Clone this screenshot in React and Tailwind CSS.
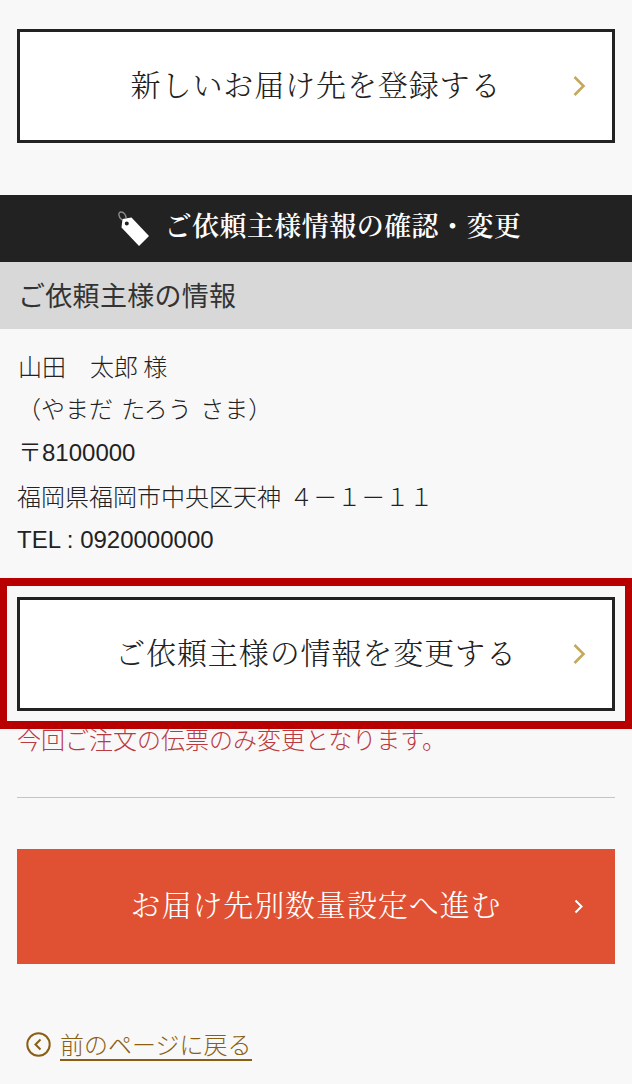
import React from 'react';

const serif = 'font-["Noto_Serif_CJK_JP","Liberation_Serif",serif]';
const gothic = 'font-["Noto_Sans_CJK_JP",sans-serif]';
const sans = 'font-["Liberation_Sans","Noto_Sans_CJK_JP",sans-serif]';

const LinkButton = ({ children }) => (
  <a className="grid grid-cols-[1fr_auto_1fr] items-center h-[114px] border-[3px] border-[#222] bg-white text-[#222] text-[30px] leading-[40px] tracking-[0.9px]">
    <span />
    <span className={`-mt-[7px] font-light ${serif}`}>{children}</span>
    <svg width="14" height="22" viewBox="0 0 14 22" fill="none" className="justify-self-end mr-[26px]">
      <path d="M2.5 2 L11.5 11 L2.5 20" stroke="#c4a95c" strokeWidth="2.6" />
    </svg>
  </a>
);

const TagIcon = () => (
  <svg width="36" height="38" viewBox="0 0 36 38" className="shrink-0">
    <path d="M6 10 C2 7 2 2 5 2 C8 2 10 5 10 8" fill="none" stroke="#8a8a8a" strokeWidth="1.4" />
    <path fillRule="evenodd" fill="#fff" d="M6.5 9 L15.5 7.5 L33 26 L23 36 L5.5 17.5 Z M10.8 11.5 A2 2 0 1 0 10.8 15.5 A2 2 0 1 0 10.8 11.5 Z" />
  </svg>
);

export default function App() {
  return (
    <div className={`w-[632px] h-[1084px] overflow-hidden bg-[#f8f8f8] pt-[29px] ${sans}`}>
      <div className="px-[17px]">
        <LinkButton>新しいお届け先を登録する</LinkButton>
      </div>

      <h2 className="mt-[52px] h-[67px] bg-[#222] text-white flex items-center justify-center gap-[13px] pl-[5px]">
        <TagIcon />
        <span className={`-mt-[7px] text-[27px] leading-[36px] tracking-[0.45px] font-semibold ${serif}`}>ご依頼主様情報の確認・変更</span>
      </h2>
      <h3 className={`h-[67px] bg-[#d8d8d8] flex items-center px-[18px] text-[27px] tracking-[0.3px] font-normal text-[#333] ${gothic}`}>ご依頼主様の情報</h3>

      <div className="px-[17px] pt-[15px] pb-[17px] text-[24px] leading-[43.4px] text-[#222]">
        <p className={`pl-[1px] font-light ${gothic}`}>山田　太郎 様</p>
        <p className={`font-light -mt-[1px] [word-spacing:3px] ${gothic}`}>（やまだ たろう さま）</p>
        <p className="pl-[1px] mt-[1px]"><span className={`leading-none font-light ${gothic}`}>〒</span>8100000</p>
        <p className={`font-light [word-spacing:3px] ${gothic}`}>福岡県福岡市中央区天神 ４－１－１１</p>
        <p>TEL : 0920000000</p>
      </div>

      <div className="border-x-[7px] border-y-[8px] border-[#b80000] px-[10px] pt-[11px] pb-[10px]">
        <LinkButton>ご依頼主様の情報を変更する</LinkButton>
      </div>

      <div className="px-[17px]">
        <p className={`-mt-[2px] text-[24px] leading-[24px] text-[#bb3a42] font-light ${gothic}`}>今回ご注文の伝票のみ変更となります。</p>
        <hr className="mt-[46px] border-t border-[#c4c4c4]" />
        <a className="mt-[51px] grid grid-cols-[1fr_auto_1fr] items-center h-[115px] bg-[#e05033] text-white text-[30px] leading-[40px] tracking-[0.9px]">
          <span />
          <span className={`-mt-[7px] font-light ${serif}`}>お届け先別数量設定へ進む</span>
          <svg width="10" height="15" viewBox="0 0 10 15" fill="none" className="justify-self-end mr-[31px]">
            <path d="M1.5 1.5 L7.5 7.5 L1.5 13.5" stroke="#fff" strokeWidth="2" />
          </svg>
        </a>
        <a className={`mt-[64px] ml-[9px] flex items-center gap-[9px] text-[24px] leading-[31px] text-[#8a5f14] font-light ${gothic}`}>
          <svg width="25" height="25" viewBox="0 0 25 25" fill="none" className="shrink-0">
            <circle cx="12.5" cy="12.5" r="11.2" stroke="#8a5f14" strokeWidth="2" />
            <path d="M14.5 7.5 L9.5 12.5 L14.5 17.5" stroke="#8a5f14" strokeWidth="2" />
          </svg>
          <span className="border-b-2 border-[#8a5f14]">前のページに戻る</span>
        </a>
      </div>
    </div>
  );
}
